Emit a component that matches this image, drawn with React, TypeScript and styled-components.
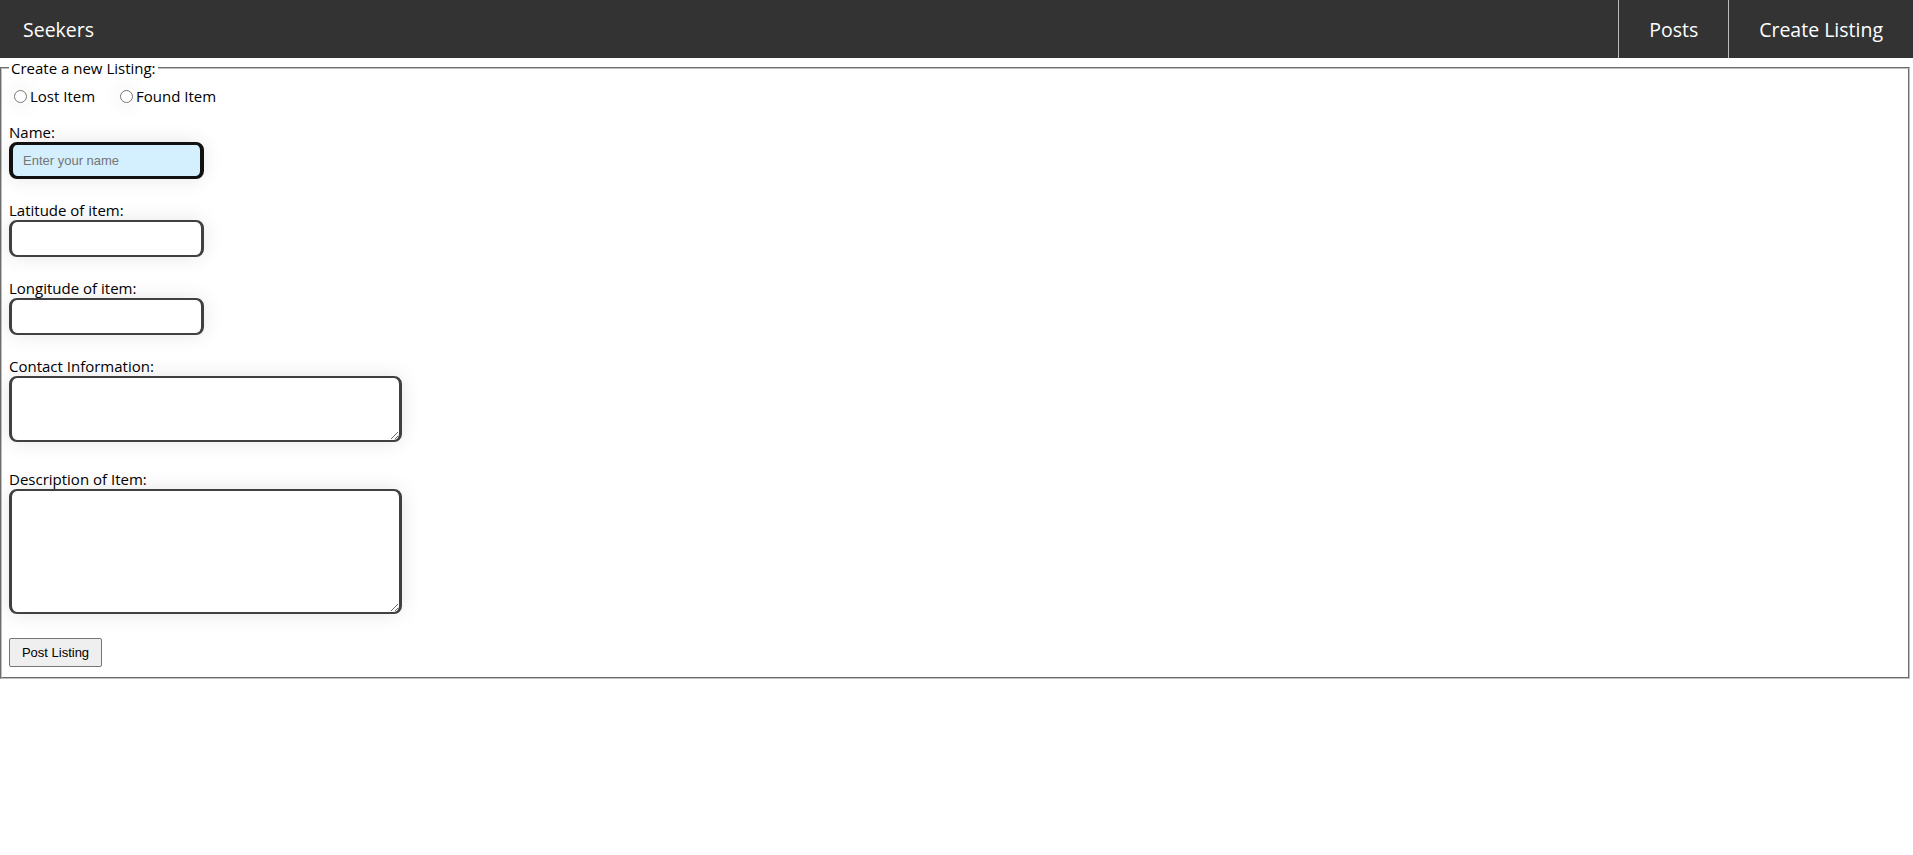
import React from 'react';
import styled, { createGlobalStyle } from 'styled-components';

const GlobalStyle = createGlobalStyle`
  html, body {
    margin: 0;
    padding: 0;
    background: #fff;
  }

  body {
    font-family: "Open Sans", "Noto Sans", sans-serif;
    font-size: 15px;
    color: #000;
  }
`;

const NavBar = styled.nav`
  display: flex;
  align-items: stretch;
  height: 58px;
  background: #333;
`;

const Brand = styled.a`
  display: flex;
  align-items: center;
  margin-right: auto;
  padding: 0 23px;
  color: #fff;
  font-size: 19.5px;
  text-decoration: none;
`;

const NavLink = styled.a`
  display: flex;
  align-items: center;
  padding: 0 30px;
  border-left: 1px solid #bbb;
  color: #fff;
  font-size: 19.5px;
  text-decoration: none;
`;

const Fieldset = styled.fieldset`
  margin: 0 3px 0 0;
  padding: 0 7px 10px;
  border: 2px groove #c0c0c0;
  min-width: 0;
`;

const Legend = styled.legend`
  padding: 0 2px;
  line-height: 20px;
`;

const RadioRow = styled.div`
  display: flex;
  align-items: center;
  height: 20px;
  margin: 8px 0 16px;
`;

const RadioOption = styled.label`
  display: flex;
  align-items: center;
  margin-right: 20px;
  line-height: 20px;
`;

const Radio = styled.input`
  width: 13px;
  height: 13px;
  margin: 0 3px 0 5px;
  border-radius: 50%;
  box-shadow: 0 0 20px rgba(0, 0, 0, 0.1);
`;

const FieldGroup = styled.div<{ $gap: number }>`
  margin-bottom: ${(p) => p.$gap}px;
`;

const Label = styled.label`
  display: block;
  line-height: 20px;
`;

const TextInput = styled.input<{ $active?: boolean }>`
  display: block;
  box-sizing: border-box;
  width: 195px;
  height: 37px;
  margin: 0;
  padding: 0 10px;
  border-style: solid;
  border-width: ${(p) => (p.$active ? '3px 4px' : '2px 3px')};
  border-color: ${(p) => (p.$active ? '#111' : '#404040')};
  border-radius: 8px;
  background: ${(p) => (p.$active ? '#d4effd' : '#fff')};
  box-shadow: 0 0 20px rgba(0, 0, 0, 0.1);
  font-family: "Liberation Sans", Arial, sans-serif;
  font-size: 13px;
  caret-color: #000;
  outline: none;

  &::placeholder {
    color: #757575;
  }
`;

const TextArea = styled.textarea<{ $height: number }>`
  display: block;
  box-sizing: border-box;
  width: 393px;
  height: ${(p) => p.$height}px;
  margin: 0;
  padding: 4px 8px;
  border-style: solid;
  border-width: 2px 3px;
  border-color: #404040;
  border-radius: 8px;
  background: #fff;
  box-shadow: 0 0 20px rgba(0, 0, 0, 0.1);
  font-family: "Liberation Sans", Arial, sans-serif;
  font-size: 13px;
  outline: none;
`;

const SubmitButton = styled.button`
  display: block;
  box-sizing: border-box;
  width: 93px;
  height: 29px;
  padding: 0 6px;
  border: 1px solid #767676;
  border-radius: 2px;
  background: #efefef;
  color: #000;
  font-family: "Liberation Sans", Arial, sans-serif;
  font-size: 13px;
`;

const fields = [
  { id: 'lat', label: 'Latitude of item:', gap: 21 },
  { id: 'lng', label: 'Longitude of item:', gap: 21 },
];

export default function App() {
  return (
    <>
      <GlobalStyle />
      <NavBar>
        <Brand href="#">Seekers</Brand>
        <NavLink href="#">Posts</NavLink>
        <NavLink href="#">Create Listing</NavLink>
      </NavBar>

      <form onSubmit={(e) => e.preventDefault()}>
        <Fieldset>
          <Legend>Create a new Listing:</Legend>
          <RadioRow>
            <RadioOption>
              <Radio type="radio" name="kind" value="lost" />
              Lost Item
            </RadioOption>
            <RadioOption>
              <Radio type="radio" name="kind" value="found" />
              Found Item
            </RadioOption>
          </RadioRow>

          <FieldGroup $gap={21}>
            <Label htmlFor="name">Name:</Label>
            <TextInput id="name" $active autoFocus placeholder="Enter your name" />
          </FieldGroup>

          {fields.map((f) => (
            <FieldGroup key={f.id} $gap={f.gap}>
              <Label htmlFor={f.id}>{f.label}</Label>
              <TextInput id={f.id} />
            </FieldGroup>
          ))}

          <FieldGroup $gap={27}>
            <Label htmlFor="contact">Contact Information:</Label>
            <TextArea id="contact" $height={66} />
          </FieldGroup>

          <FieldGroup $gap={24}>
            <Label htmlFor="desc">Description of Item:</Label>
            <TextArea id="desc" $height={125} />
          </FieldGroup>

          <SubmitButton type="submit">Post Listing</SubmitButton>
        </Fieldset>
      </form>
    </>
  );
}
